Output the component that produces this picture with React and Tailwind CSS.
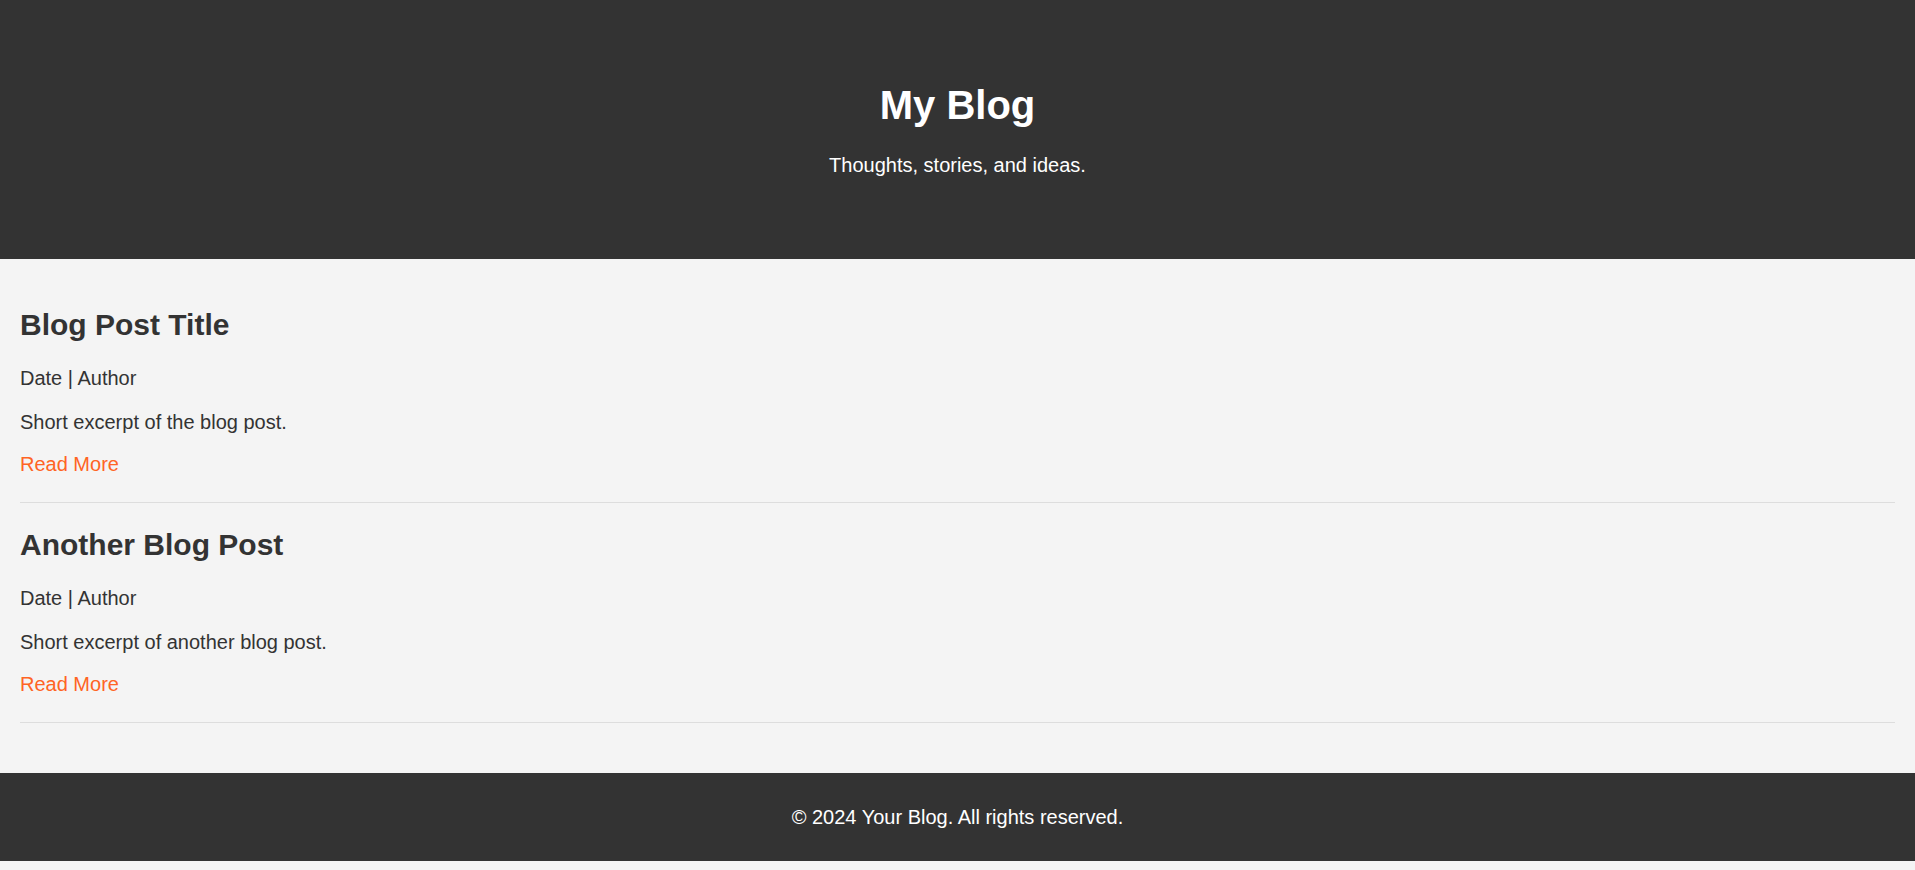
import React from "react";

const posts = [
  { title: "Blog Post Title", meta: "Date | Author", excerpt: "Short excerpt of the blog post." },
  { title: "Another Blog Post", meta: "Date | Author", excerpt: "Short excerpt of another blog post." },
];

const Post = ({ post }) => (
  <article className="pt-[22px] pb-[23px] border-b border-[#ddd]">
    <h2 className="text-[30px] leading-[40px] font-bold text-[#333]">{post.title}</h2>
    <p className="mt-[18px] text-[20px] leading-[30px] text-[#333]">{post.meta}</p>
    <p className="mt-[14px] text-[20px] leading-[30px] text-[#333]">{post.excerpt}</p>
    <a href="#" className="block mt-[12px] text-[20px] leading-[30px] text-[#ff6424]">
      Read More
    </a>
  </article>
);

export default function App() {
  return (
    <div className="min-h-screen bg-[#f4f4f4] pb-[10px] font-['Liberation_Sans',Arial,sans-serif]">
      <header className="bg-[#333] text-white text-center pt-[82px] pb-[79px]">
        <h1 className="text-[40px] leading-[46px] font-bold">My Blog</h1>
        <p className="mt-[22px] text-[20px] leading-[30px]">Thoughts, stories, and ideas.</p>
      </header>

      <main className="px-[20px] pt-[24px] pb-[50px]">
        {posts.map((post) => (
          <Post key={post.title} post={post} />
        ))}
      </main>

      <footer className="bg-[#333] text-white text-center h-[88px] flex items-center justify-center">
        <p className="text-[20px] leading-[30px]">© 2024 Your Blog. All rights reserved.</p>
      </footer>
    </div>
  );
}
